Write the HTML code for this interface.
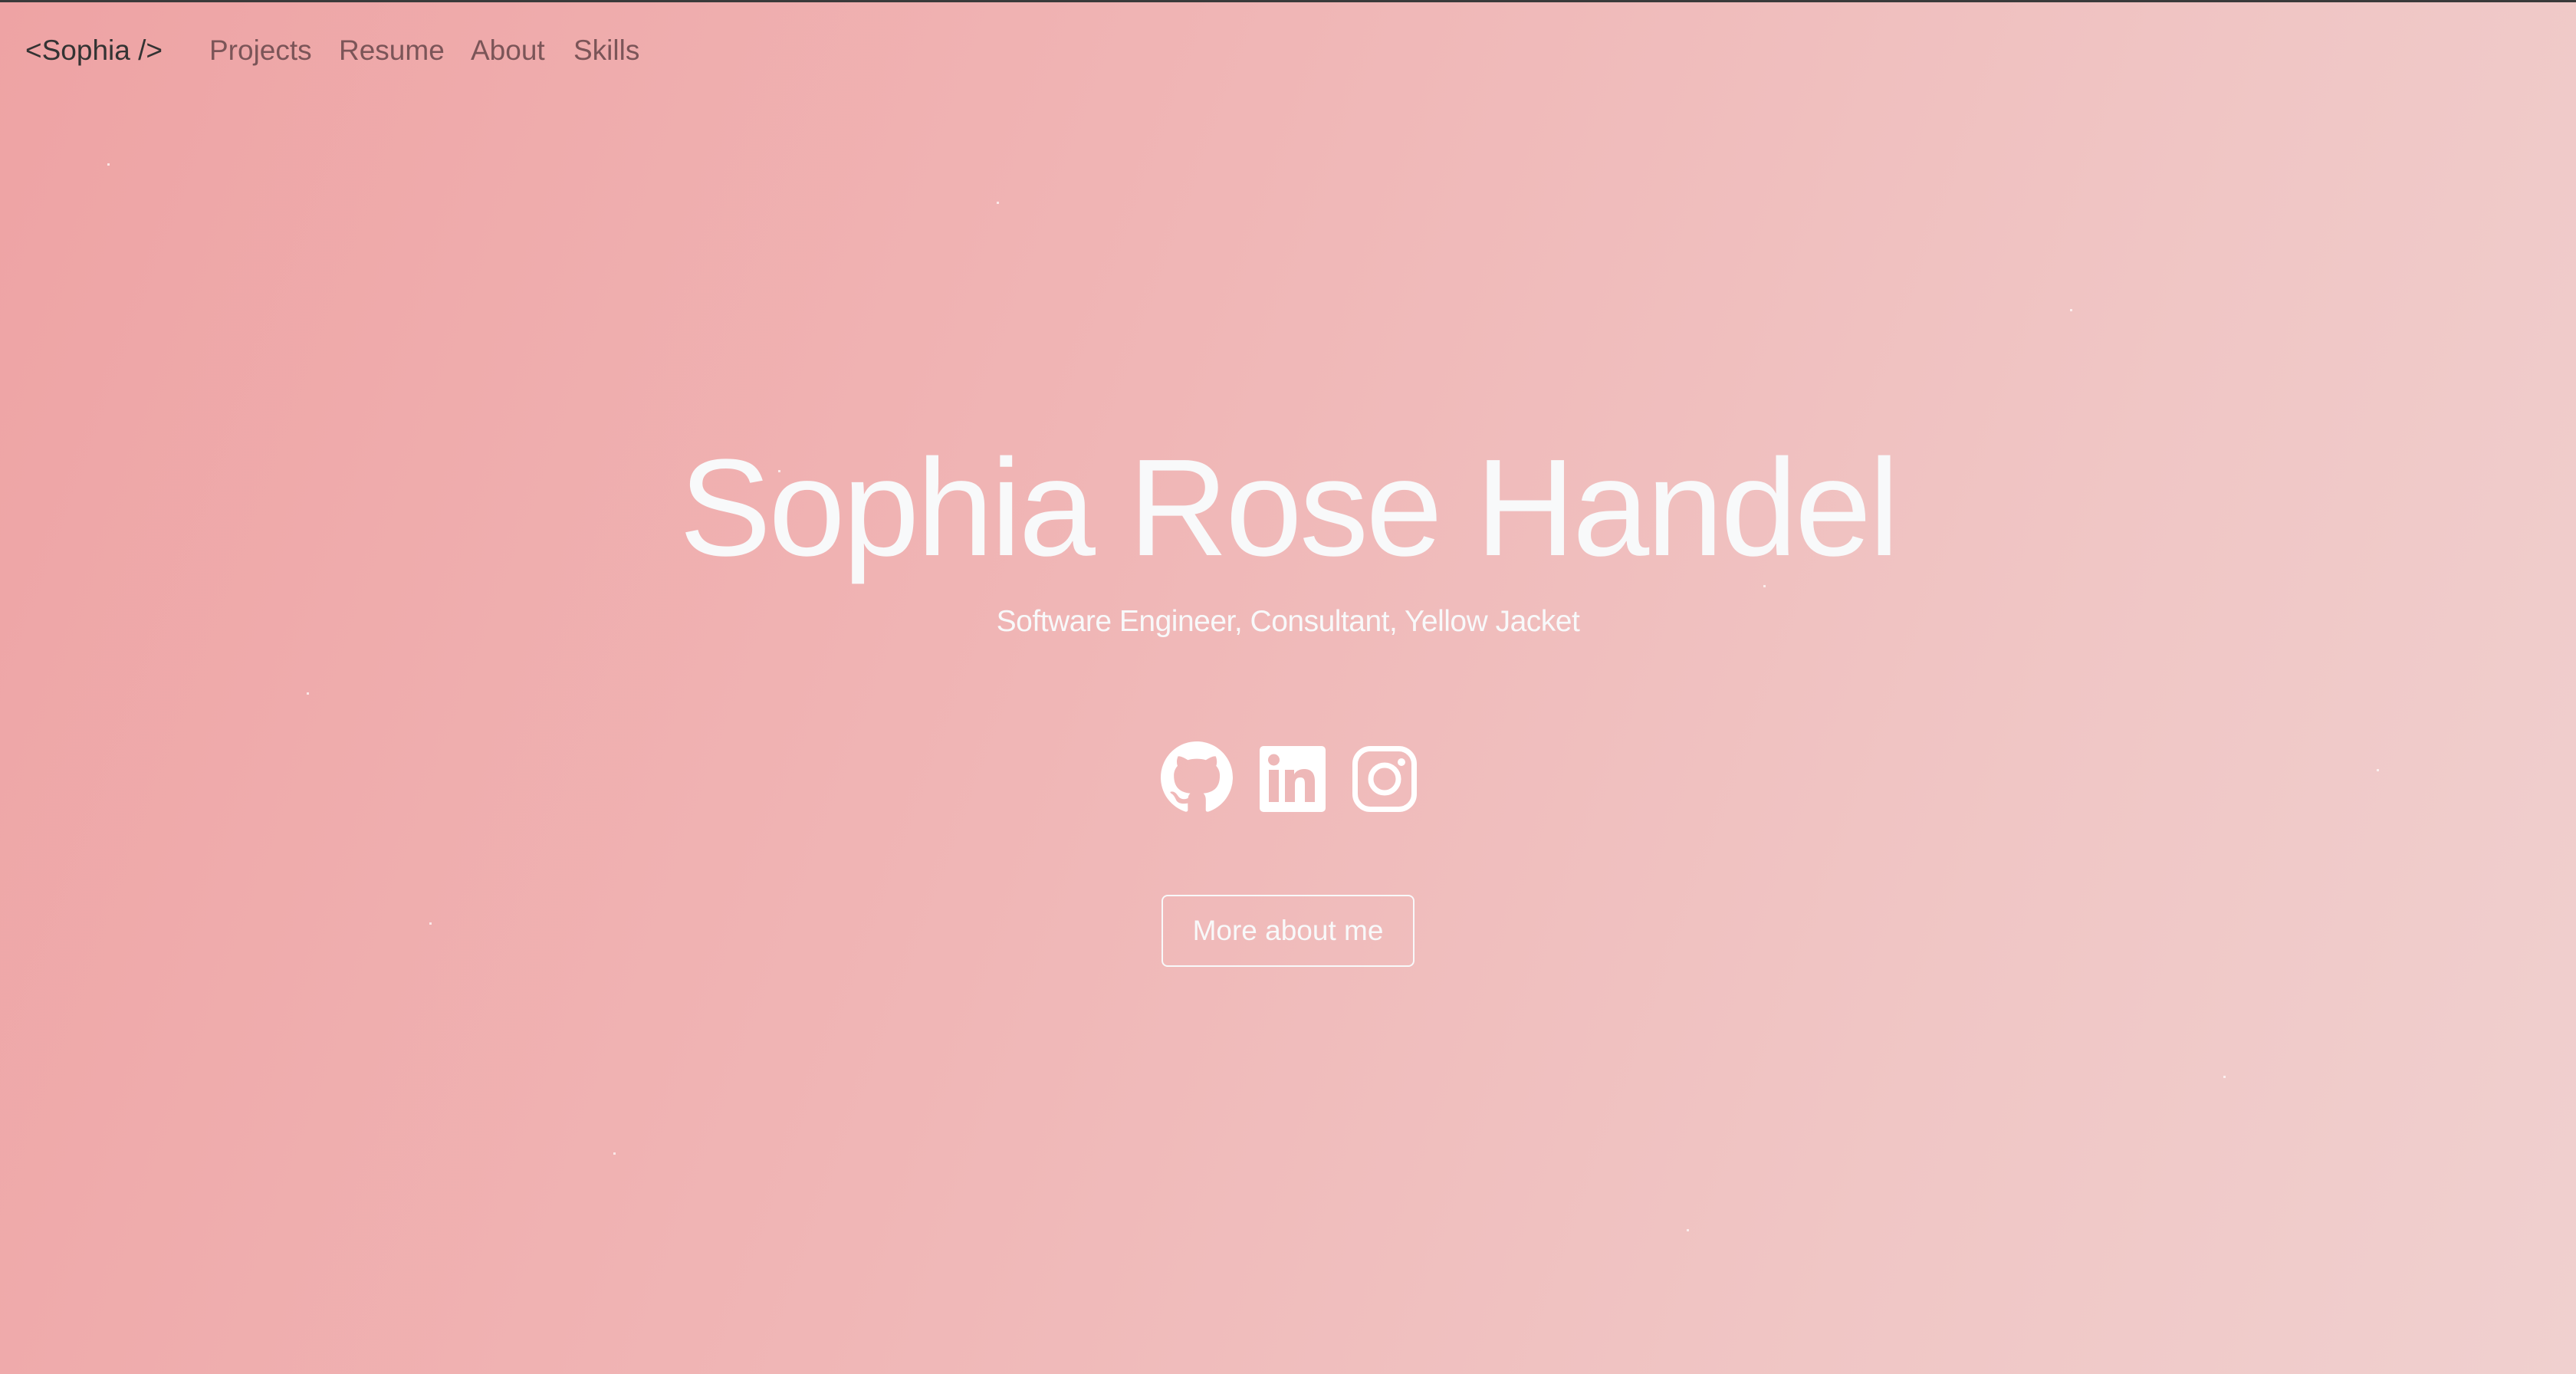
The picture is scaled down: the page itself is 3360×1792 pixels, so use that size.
<!DOCTYPE html>
<html><head><meta charset="utf-8"><style>
html,body{margin:0;padding:0}
body{width:3360px;height:1792px;overflow:hidden;position:relative;font-family:"Liberation Sans",sans-serif;
background:linear-gradient(110deg,#eea3a4 0%,#f0b5b5 40%,#f0c6c5 75%,#f0d0cf 100%);border-top:3px solid #3a3a3a;box-sizing:border-box}
.nav{position:absolute;top:42px;left:33px;font-size:37px;white-space:nowrap}
.nav span{position:absolute;top:0}
h1{position:absolute;left:0;width:3360px;top:555px;margin:0;text-align:center;color:#f8f9fa;font-weight:300;font-size:180px;letter-spacing:-3.5px;line-height:210px}
.sub{position:absolute;left:0;width:3360px;top:786px;text-align:center;color:#f8f9fa;font-size:39px;letter-spacing:-0.5px}
.btn{position:absolute;left:1515px;top:1164px;width:326px;height:90px;border:2px solid #f8f9fa;border-radius:8px;color:#f8f9fa;font-size:37px;text-align:center;line-height:90px}
svg{position:absolute}
.dot{position:absolute;width:3px;height:3px;background:#fff;opacity:.7}
</style></head><body>
<div class="nav"><span style="left:0;color:#333">&lt;Sophia /&gt;</span><span style="left:240px;color:#7b5558">Projects</span><span style="left:409px;color:#7b5558">Resume</span><span style="left:581px;color:#7b5558">About</span><span style="left:715px;color:#7b5558">Skills</span></div>
<h1>Sophia Rose Handel</h1>
<div class="sub">Software Engineer, Consultant, Yellow Jacket</div>
<svg style="left:1514px;top:964px" width="94" height="94" viewBox="0 0 16 16"><path fill="#fff" d="M8 0C3.580 0 0 3.58 0 8c0 3.54 2.29 6.53 5.47 7.590.4.07.55-.17.55-.38 0-.19-.01-.82-.01-1.49-2.010.37-2.53-.49-2.69-.94-.09-.23-.48-.94-.82-1.13-.28-.15-.68-.52-.01-.53.63-.01 1.080.58 1.230.82.72 1.21 1.870.87 2.330.66.07-.52.28-.87.51-1.07-1.78-.2-3.64-.89-3.64-3.95 0-.87.31-1.59.82-2.15-.08-.2-.36-1.020.08-2.12 0 0 .67-.21 2.2.82.64-.18 1.32-.27 2-.27.68 0 1.36.09 2 .27 1.53-1.04 2.2-.82 2.2-.82.44 1.1.16 1.92.08 2.12.51.56.82 1.27.82 2.15 0 3.07-1.87 3.75-3.65 3.95.29.25.54.73.54 1.48 0 1.07-.01 1.93-.01 2.2 0 .21.15.46.55.38A8.013 8.013 0 0016 8c0-4.42-3.58-8-8-8z"/></svg>
<svg style="left:1643px;top:970px" width="86" height="86" viewBox="0 0 86 86"><rect x="0" y="0" width="86" height="86" rx="5" fill="#fff"/><rect x="12" y="31" width="13" height="42" fill="#eeb8b8"/><circle cx="18.5" cy="18" r="7.5" fill="#eeb8b8"/><path fill="#eeb8b8" d="M33 31h12v6c2-4 7-7 13-7 10 0 14 6 14 16v27H59V50c0-6-1-9-6-9s-7 3-7 9v23H33z"/></svg>
<svg style="left:1764px;top:970px" width="84" height="86" viewBox="0 0 84 86"><rect x="3.5" y="3.5" width="77" height="79" rx="20" fill="none" stroke="#fff" stroke-width="7"/><circle cx="42" cy="43" r="18" fill="none" stroke="#fff" stroke-width="7"/><circle cx="64" cy="21" r="5" fill="#fff"/></svg>
<div class="btn">More about me</div>
<div class="dot" style="left:140px;top:210px"></div><div class="dot" style="left:1015px;top:610px"></div><div class="dot" style="left:2300px;top:760px"></div><div class="dot" style="left:560px;top:1200px"></div><div class="dot" style="left:2700px;top:400px"></div><div class="dot" style="left:3100px;top:1000px"></div><div class="dot" style="left:800px;top:1500px"></div><div class="dot" style="left:2200px;top:1600px"></div><div class="dot" style="left:400px;top:900px"></div><div class="dot" style="left:1300px;top:260px"></div><div class="dot" style="left:2900px;top:1400px"></div>
</body></html>
